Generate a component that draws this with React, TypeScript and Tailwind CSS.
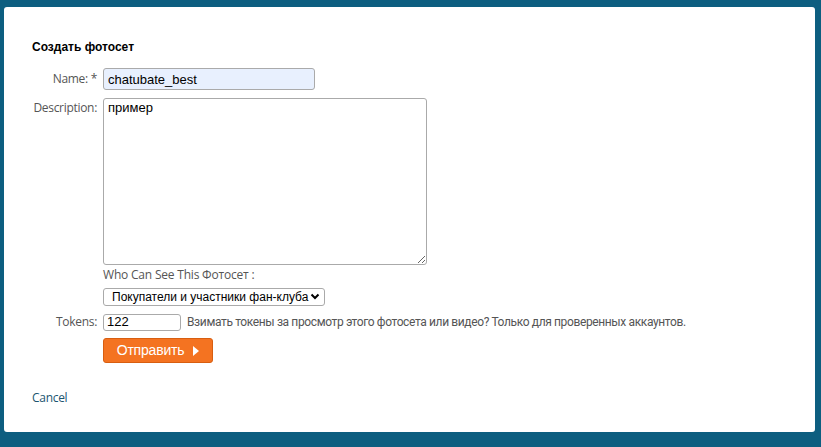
export default function App() {
  return (
    <div className="w-[821px] h-[447px] bg-[#0d5e80] pt-[7px] pl-[4px] pr-[6px] pb-[15px]">
      <div className="h-full bg-white rounded-[3px] pl-[28px] pt-[33px] font-['Liberation_Sans',Arial,sans-serif]">
        <h1 className="text-[12px] font-bold text-black leading-[14px]">Создать фотосет</h1>

        <div className="mt-[14px] flex items-center">
          <label className="w-[66px] pr-[1px] text-right text-[12px] text-[#555] font-['Open_Sans',sans-serif] tracking-[-0.3px]">
            Name: *
          </label>
          <input
            defaultValue="chatubate_best"
            className="ml-[5px] w-[212px] h-[22px] bg-[#e8f0fe] border border-[#aaa] rounded-[3px] px-[4px] text-[13px] text-black outline-none"
          />
        </div>

        <div className="mt-[8px] flex items-start">
          <label className="w-[66px] pr-[1px] pt-[1px] text-right text-[12px] text-[#555] font-['Open_Sans',sans-serif] tracking-[-0.3px]">
            Description:
          </label>
          <textarea
            defaultValue="пример"
            className="ml-[5px] w-[324px] h-[167px] border border-[#aaa] rounded-[3px] px-[4px] py-[1px] text-[13px] leading-[16px] text-black outline-none resize"
          />
        </div>

        <div className="ml-[71px] mt-[2px] text-[12px] leading-[16px] text-[#555] font-['Open_Sans',sans-serif] tracking-[-0.2px]">
          Who Can See This Фотосет :
        </div>

        <div className="ml-[71px] mt-[5px] relative w-[222px]">
          <div className="h-[18px] border border-[#aaa] rounded-[3px] flex items-center pl-[8px] text-[12px] leading-[16px] text-black whitespace-nowrap overflow-hidden">
            Покупатели и участники фан-клуба
          </div>
          <svg className="absolute right-[5px] top-[5px]" width="10" height="8" viewBox="0 0 10 8">
            <path d="M1.5 1.5 L5 5 L8.5 1.5" fill="none" stroke="#000" strokeWidth="2" />
          </svg>
        </div>

        <div className="mt-[7px] flex items-center">
          <label className="w-[66px] pr-[1px] text-right text-[12px] text-[#555] font-['Open_Sans',sans-serif] tracking-[-0.3px]">
            Tokens:
          </label>
          <input
            defaultValue="122"
            className="ml-[5px] w-[78px] h-[17px] border border-[#aaa] rounded-[3px] px-[3px] text-[13px] text-black outline-none"
          />
          <span className="ml-[6px] text-[12px] text-[#555] font-['Roboto',sans-serif] tracking-[-0.37px] whitespace-nowrap">
            Взимать токены за просмотр этого фотосета или видео? Только для проверенных аккаунтов.
          </span>
        </div>

        <button className="ml-[71px] mt-[7px] w-[110px] h-[25px] bg-[#f47321] border border-[#d85e10] rounded-[3px] flex items-center justify-center gap-[9px] text-white text-[14px] tracking-[-0.2px]">
          <span>Отправить</span>
          <svg width="6" height="10" viewBox="0 0 6 10">
            <path d="M0 0 L6 5 L0 10 Z" fill="#fff" />
          </svg>
        </button>

        <div className="mt-[26px] text-[12px] text-[#1b5570] font-['Open_Sans',sans-serif] tracking-[-0.3px]">
          Cancel
        </div>
      </div>
    </div>
  );
}
